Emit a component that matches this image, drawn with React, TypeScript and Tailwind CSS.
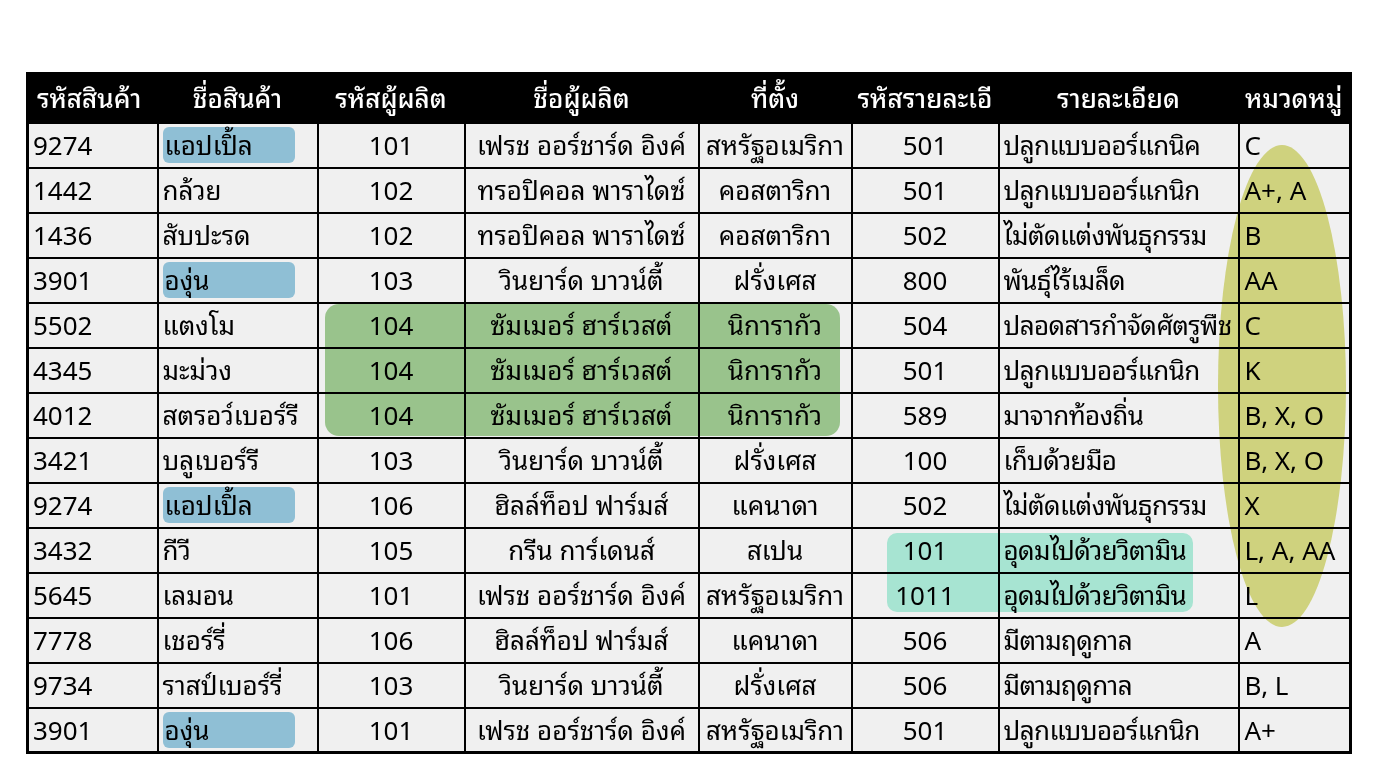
const COLS = [
  { title: "รหัสสินค้า", w: "w-[130px]", align: "text-left pl-[4px]" },
  { title: "ชื่อสินค้า", w: "w-[160px]", align: "text-left pl-[4px]" },
  { title: "รหัสผู้ผลิต", w: "w-[147px]", align: "text-center" },
  { title: "ชื่อผู้ผลิต", w: "w-[234px]", align: "text-center" },
  { title: "ที่ตั้ง", w: "w-[153px]", align: "text-center" },
  { title: "รหัสรายละเอี", w: "w-[147px]", align: "text-center" },
  { title: "รายละเอียด", w: "w-[240px]", align: "text-left pl-[4px] tracking-[-0.6px]" },
  { title: "หมวดหมู่", w: "w-[112px]", align: "text-left pl-[5px]" },
];

// [รหัส, ชื่อ, ผู้ผลิต, ชื่อผู้ผลิต, ที่ตั้ง, รหัสรายละเอียด, รายละเอียด, หมวด, blue?]
const ROWS: [string, string, string, string, string, string, string, string, boolean][] = [
  ["9274", "แอปเปิ้ล", "101", "เฟรช ออร์ชาร์ด อิงค์", "สหรัฐอเมริกา", "501", "ปลูกแบบออร์แกนิค", "C", true],
  ["1442", "กล้วย", "102", "ทรอปิคอล พาราไดซ์", "คอสตาริกา", "501", "ปลูกแบบออร์แกนิก", "A+, A", false],
  ["1436", "สับปะรด", "102", "ทรอปิคอล พาราไดซ์", "คอสตาริกา", "502", "ไม่ตัดแต่งพันธุกรรม", "B", false],
  ["3901", "องุ่น", "103", "วินยาร์ด บาวน์ตี้", "ฝรั่งเศส", "800", "พันธุ์ไร้เมล็ด", "AA", true],
  ["5502", "แตงโม", "104", "ซัมเมอร์ ฮาร์เวสต์", "นิการากัว", "504", "ปลอดสารกำจัดศัตรูพืช", "C", false],
  ["4345", "มะม่วง", "104", "ซัมเมอร์ ฮาร์เวสต์", "นิการากัว", "501", "ปลูกแบบออร์แกนิก", "K", false],
  ["4012", "สตรอว์เบอร์รี", "104", "ซัมเมอร์ ฮาร์เวสต์", "นิการากัว", "589", "มาจากท้องถิ่น", "B, X, O", false],
  ["3421", "บลูเบอร์รี", "103", "วินยาร์ด บาวน์ตี้", "ฝรั่งเศส", "100", "เก็บด้วยมือ", "B, X, O", false],
  ["9274", "แอปเปิ้ล", "106", "ฮิลล์ท็อป ฟาร์มส์", "แคนาดา", "502", "ไม่ตัดแต่งพันธุกรรม", "X", true],
  ["3432", "กีวี", "105", "กรีน การ์เดนส์", "สเปน", "101", "อุดมไปด้วยวิตามิน", "L, A, AA", false],
  ["5645", "เลมอน", "101", "เฟรช ออร์ชาร์ด อิงค์", "สหรัฐอเมริกา", "1011", "อุดมไปด้วยวิตามิน", "L", false],
  ["7778", "เชอร์รี่", "106", "ฮิลล์ท็อป ฟาร์มส์", "แคนาดา", "506", "มีตามฤดูกาล", "A", false],
  ["9734", "ราสป์เบอร์รี่", "103", "วินยาร์ด บาวน์ตี้", "ฝรั่งเศส", "506", "มีตามฤดูกาล", "B, L", false],
  ["3901", "องุ่น", "101", "เฟรช ออร์ชาร์ด อิงค์", "สหรัฐอเมริกา", "501", "ปลูกแบบออร์แกนิก", "A+", true],
];

const FONT = {
  fontFamily: '"Noto Sans", "Noto Sans Thai Looped", "Noto Sans Thai", sans-serif',
};

export default function App() {
  return (
    <div className="min-h-[768px] w-[1376px] bg-white pt-[72px] pl-[26px]" style={FONT}>
      <div className="relative w-[1323px]">
        <table className="w-[1323px] table-fixed border-collapse border-[3px] border-black text-[26px] leading-none text-black">
          <thead>
            <tr className="h-[49px] bg-black">
              {COLS.map((c, j) => (
                <th
                  key={c.title}
                  className={`${c.w} ${j === 0 ? "pl-[8px] text-left" : "text-center"} overflow-hidden whitespace-nowrap font-medium text-white`}
                >
                  {c.title}
                </th>
              ))}
            </tr>
          </thead>
          <tbody>
            {ROWS.map((r, i) => (
              <tr key={i} className="h-[45px] bg-[#f0f0f0]">
                {r.slice(0, 8).map((v, j) => (
                  <td
                    key={j}
                    className={`${COLS[j].align} overflow-hidden whitespace-nowrap border-2 border-black p-0`}
                  >
                    {j === 1 && r[8] ? (
                      <div className="flex h-[36px] w-[132px] items-center rounded-[6px] bg-[#8fbfd5] pl-[2px]">
                        {v}
                      </div>
                    ) : (
                      v
                    )}
                  </td>
                ))}
              </tr>
            ))}
          </tbody>
        </table>

        {/* highlight marks drawn over the sheet */}
        <div className="pointer-events-none absolute top-[232px] left-[299px] h-[132px] w-[515px] rounded-[14px] bg-[#a3d095] mix-blend-multiply" />
        <div className="pointer-events-none absolute top-[461px] left-[861px] h-[79px] w-[306px] rounded-[10px] bg-[#b2f3df] mix-blend-multiply" />
        <div className="pointer-events-none absolute top-[73px] left-[1192px] h-[482px] w-[128px] rounded-[50%] bg-[#dcdf86] mix-blend-multiply" />
      </div>
    </div>
  );
}
